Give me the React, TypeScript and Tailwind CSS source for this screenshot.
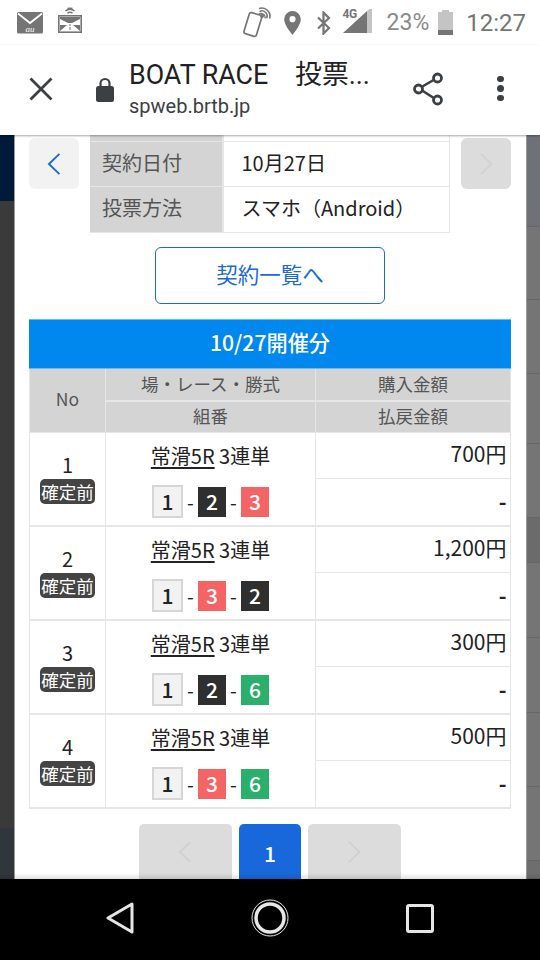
import React from "react";

const jp = "[font-family:'Noto_Sans_CJK_JP','Noto_Sans',sans-serif]";

const GREY = "#757575";

function StatusBar() {
  return (
    <div className="h-[45px] bg-white flex items-center shrink-0 pl-[17px] pr-[14px]">
      <svg width="26" height="22" viewBox="0 0 26 22" className="mr-[15px]">
        <path d="M1.5 0h23A1.5 1.5 0 0 1 26 1.5V20a1.5 1.5 0 0 1-1.5 1.5h-23A1.5 1.5 0 0 1 0 20V1.5A1.5 1.5 0 0 1 1.5 0z" fill={GREY} />
        <path d="M1 1.5l12 9.5 12-9.5" stroke="#fff" strokeWidth="1.8" fill="none" />
        <text x="13" y="19.500" textAnchor="middle" fontSize="9" fontStyle="italic" fontFamily="Liberation Serif, serif" fill="#fff">au</text>
      </svg>
      <svg width="24" height="27" viewBox="0 0 24 27" className="mt-[-6px]">
        <path d="M7.5 5a6.5 6.5 0 0 1 9 0M9.5 2.6a10 10 0 0 1 5 0" stroke={GREY} strokeWidth="1.5" fill="none" />
        <path d="M9.5 7.2a3.5 3.5 0 0 1 5 0" stroke={GREY} strokeWidth="1.5" fill="none" />
        <rect x="0.8" y="9.8" width="22.4" height="16.4" fill="#fff" stroke={GREY} strokeWidth="1.6" />
        <path d="M2 11h20v2L14 17h-4L2 13zM2 25l7-6H2zM22 25l-7-6h7z" fill={GREY} />
        <path d="M11 19h2M12 21v3" stroke={GREY} strokeWidth="1" />
      </svg>
      <div className="flex-1" />
      <svg width="29" height="31" viewBox="0 0 29 31" className="mr-[13px] mt-[-1px]">
        <rect x="4.5" y="6.5" width="13" height="22" rx="2" transform="rotate(17 11 17)" fill="#fff" stroke={GREY} strokeWidth="1.7" />
        <circle cx="20" cy="9" r="2" fill={GREY} />
        <path d="M17.5 4.6a5 5 0 0 1 7 6.6M17 1.6a8 8 0 0 1 10.5 10" stroke={GREY} strokeWidth="1.6" fill="none" />
        <path d="M16.5 7.5a4 4 0 0 1 6.5 4" stroke={GREY} strokeWidth="1.2" fill="none" />
      </svg>
      <svg width="17" height="24" viewBox="0 0 17 24" className="mr-[15px]">
        <path fillRule="evenodd" d="M8.5 0A8.3 8.3 0 0 0 .2 8.3C.2 14.5 8.5 24 8.5 24s8.3-9.5 8.3-15.700A8.300 8.300 0 0 0 8.500 0zm0 11.300a3.100 3.100 0 1 1 0-6.200 3.100 3.100 0 0 1 0 6.200z" fill={GREY} />
      </svg>
      <svg width="16" height="24" viewBox="0 0 16 24" className="mr-[11px]">
        <path d="M2 6.500L13 17l-5.500 5.500V1.500L13 7 2 17.500" stroke={GREY} strokeWidth="2.200" fill="none" />
      </svg>
      <div className="relative w-[30px] h-[27px] mr-[14px]">
        <span className="absolute left-0 top-[-3px] text-[12px] leading-[16px] font-bold text-[#757575] [font-family:Roboto,sans-serif] tracking-[-0.5px]">4G</span>
        <svg width="30" height="27" viewBox="0 0 30 27">
          <path d="M0 24L24 2v22z" fill={GREY} />
          <path d="M24 2l5-4v26h-5z" fill="#c4c4c4" />
        </svg>
      </div>
      <span className="text-[23px] leading-none text-[#8a8a8a] [font-family:Roboto,sans-serif] mr-[9px]">23%</span>
      <div className="w-[15px] h-[25px] mr-[13px] flex flex-col items-center">
        <div className="w-[7px] h-[2px] bg-[#c4c4c4]" />
        <div className="w-[15px] h-[18px] bg-[#c4c4c4]" />
        <div className="w-[15px] h-[5px] bg-[#757575]" />
      </div>
      <span className="text-[24px] leading-none text-[#757575] [font-family:Roboto,sans-serif]">12:27</span>
    </div>
  );
}

function Toolbar() {
  return (
    <div className="h-[90px] bg-white flex items-center shrink-0 relative z-10 pb-[3px] shadow-[0_1px_2px_rgba(0,0,0,0.35)]">
      <svg width="24" height="24" viewBox="0 0 24 24" className="ml-[29px] shrink-0">
        <path d="M1.500 1.500l21 21M22.500 1.500l-21 21" stroke="#3c4043" strokeWidth="2.800" fill="none" />
      </svg>
      <svg width="18" height="25" viewBox="0 0 18 25" className="ml-[43px] shrink-0 mt-[1px]">
        <path d="M4.500 11V6.500a4.500 4.500 0 0 1 9 0V11" stroke="#3c4043" strokeWidth="2.200" fill="none" />
        <rect x="0" y="9" width="18" height="16" rx="2.500" fill="#3c4043" />
      </svg>
      <div className="ml-[15px] w-[250px] flex flex-col text-[#212121] [font-family:Roboto,'Noto_Sans_CJK_JP',sans-serif]">
        <span className="text-[26.800px] leading-[32px] whitespace-pre">BOAT RACE　投票...</span>
        <span className="text-[20px] leading-[24px] mt-[3px] text-[#3c4043]">spweb.brtb.jp</span>
      </div>
      <svg width="32" height="34" viewBox="0 0 32 34" className="ml-[33px] shrink-0">
        <path d="M25 6L7 16.500 25 28" stroke="#3c4043" strokeWidth="2.600" fill="none" />
        <circle cx="25.500" cy="6" r="4" fill="#fff" stroke="#3c4043" strokeWidth="2.800" />
        <circle cx="6.500" cy="17" r="4" fill="#fff" stroke="#3c4043" strokeWidth="2.800" />
        <circle cx="25.500" cy="28" r="4" fill="#fff" stroke="#3c4043" strokeWidth="2.800" />
      </svg>
      <div className="ml-[53px] flex flex-col gap-[3px] shrink-0">
        <div className="w-[6.500px] h-[6.500px] rounded-full bg-[#3c4043]" />
        <div className="w-[6.500px] h-[6.500px] rounded-full bg-[#3c4043]" />
        <div className="w-[6.500px] h-[6.500px] rounded-full bg-[#3c4043]" />
      </div>
    </div>
  );
}

function Chevron({ dir, color, size = 24 }: { dir: "l" | "r"; color: string; size?: number }) {
  return (
    <svg width={size * 0.6} height={size} viewBox="0 0 15 24">
      <path d={dir === "l" ? "M13 1.500L2 12l11 10.500" : "M2 1.500L13 12 2 22.500"} stroke={color} strokeWidth="2" fill="none" />
    </svg>
  );
}

function InfoRow({ label, value, h }: { label: string; value: string; h: string }) {
  return (
    <div className={`flex gap-[1.500px] ${h}`}>
      <div className="w-[132px] bg-[#d4d4d4] flex items-center pl-[12px] pb-[2px] text-[#555] text-[20px]">{label}</div>
      <div className="flex-1 bg-white flex items-center pl-[18px] pb-[2px] text-[#222] text-[20px]">{value}</div>
    </div>
  );
}

type Boat = { n: string; cls: string };
const W: Boat = { n: "1", cls: "" };
const K: Boat = { n: "2", cls: "bg-[#2f2f2f]" };
const R: Boat = { n: "3", cls: "bg-[#f56464]" };
const G: Boat = { n: "6", cls: "bg-[#2bb06c]" };

function Pick({ b }: { b: Boat }) {
  if (!b.cls) {
    return (
      <span className="w-[31px] h-[33px] bg-[#f2f2f2] border-2 border-[#d6d6d6] flex items-center justify-center text-[#222] text-[21px] font-medium leading-none">
        {b.n}
      </span>
    );
  }
  return (
    <span className={`w-[28px] h-[30px] ${b.cls} flex items-center justify-center text-white text-[21px] font-medium leading-none`}>
      {b.n}
    </span>
  );
}

const rows: { no: string; amount: string; picks: [Boat, Boat, Boat] }[] = [
  { no: "1", amount: "700円", picks: [W, K, R] },
  { no: "2", amount: "1,200円", picks: [W, R, K] },
  { no: "3", amount: "300円", picks: [W, K, G] },
  { no: "4", amount: "500円", picks: [W, R, G] },
];

function BetTable() {
  return (
    <div className="bg-[#e6e6e6] px-[1px] pb-[1.500px] grid grid-cols-[75px_209px_194px] gap-x-[1px]">
      <div className="row-span-2 bg-[#d4d4d4] flex items-center justify-center text-[#555] text-[17.500px] mb-[1px] pb-[2px]">No</div>
      <div className="h-[31px] bg-[#d4d4d4] flex items-center justify-center text-[#555] text-[17.500px]">場・レース・勝式</div>
      <div className="h-[31px] bg-[#d4d4d4] flex items-center justify-center text-[#555] text-[17.500px]">購入金額</div>
      <div className="h-[30.500px] mt-[1.500px] mb-[1px] pb-[2px] bg-[#d4d4d4] flex items-center justify-center text-[#555] text-[17.500px]">組番</div>
      <div className="h-[30.500px] mt-[1.500px] mb-[1px] pb-[2px] bg-[#d4d4d4] flex items-center justify-center text-[#555] text-[17.500px]">払戻金額</div>
      {rows.map((r, i) => (
        <React.Fragment key={r.no}>
          <div className={`h-[92px] bg-white flex flex-col items-center justify-center pb-[3px] ${i < 3 ? "mb-[2px]" : ""}`}>
            <span className="text-[#222] text-[20px] leading-[28px]">{r.no}</span>
            <span className="w-[55px] h-[25px] rounded-[5px] bg-[#444] text-white text-[17.500px] leading-[25px] text-center">確定前</span>
          </div>
          <div className={`h-[92px] bg-white flex flex-col items-center pt-[8px] ${i < 3 ? "mb-[2px]" : ""}`}>
            <span className="text-[#222] text-[20px] leading-[30px]">
              <span className="underline underline-offset-[3px]">常滑5R</span> 3連単
            </span>
            <div className="flex items-center mt-[14px] text-[#222] text-[19.500px] leading-none">
              <Pick b={r.picks[0]} />
              <span className="w-[15px] text-center">-</span>
              <Pick b={r.picks[1]} />
              <span className="w-[15px] text-center">-</span>
              <Pick b={r.picks[2]} />
            </div>
          </div>
          <div className={`h-[92px] flex flex-col gap-[1.500px] ${i < 3 ? "mb-[2px]" : ""}`}>
            <div className="h-[44.500px] bg-white flex items-center justify-end pr-[3.500px] pb-[4px] text-[#222] text-[21px]">{r.amount}</div>
            <div className="flex-1 bg-white flex items-center justify-end pr-[3.500px] text-[#222] text-[21px] font-bold">-</div>
          </div>
        </React.Fragment>
      ))}
    </div>
  );
}

function LeftStrip() {
  return (
    <div className="w-[15px] shrink-0 flex flex-col border-r border-[#9a9a9a]">
      <div className="h-[66px] bg-[#001a3a]" />
      <div className="flex-1 bg-[#3a3a3a]" />
      <div className="h-[51px] bg-[#31363c]" />
    </div>
  );
}

function RightStrip() {
  const bands = [
    { h: "h-[92px]", c: "bg-[#6e7278]" },
    { h: "h-[73px]", c: "bg-[#757575]" },
    { h: "h-[74px]", c: "bg-[#757575]" },
    { h: "h-[70px]", c: "bg-[#757575]" },
    { h: "h-[74px]", c: "bg-[#757575]" },
    { h: "h-[45px]", c: "bg-[#6b6b6b]" },
    { h: "h-[75px]", c: "bg-[#757575]" },
    { h: "h-[75px]", c: "bg-[#757575]" },
    { h: "h-[74px]", c: "bg-[#757575]" },
    { h: "h-[74px]", c: "bg-[#757575]" },
    { h: "h-[18px]", c: "bg-[#6e6e6e]" },
  ];
  return (
    <div className="w-[14px] shrink-0 flex flex-col border-l border-[#9a9a9a] overflow-hidden">
      {bands.map((b, i) => (
        <div key={i} className={`${b.h} ${b.c} border-b border-[#666] shrink-0`} />
      ))}
    </div>
  );
}

function Pager() {
  return (
    <div className="flex justify-center gap-[7px] mt-[15px]">
      <div className="w-[93px] h-[70px] shrink-0 rounded-[5px] bg-[#dcdcdc] flex items-center justify-center pb-[13px]">
        <Chevron dir="l" color="#d0d0d0" />
      </div>
      <div className="w-[62px] h-[70px] shrink-0 rounded-[5px] bg-[#1868dc] flex items-start justify-center pt-[14px] text-white text-[21px] font-medium leading-[30px]">1</div>
      <div className="w-[93px] h-[70px] shrink-0 rounded-[5px] bg-[#dcdcdc] flex items-center justify-center pb-[13px]">
        <Chevron dir="r" color="#d0d0d0" />
      </div>
    </div>
  );
}

function Content() {
  return (
    <div className="relative flex-1 flex min-h-0 overflow-hidden">
      <LeftStrip />
      <div className={`flex-1 bg-white pl-[14px] pr-[15px] overflow-hidden ${jp}`}>
        <div className="flex justify-between items-start">
          <button className="w-[50px] h-[51px] mt-[3px] rounded-[6px] bg-[#f2f2f2] flex items-center justify-center">
            <Chevron dir="l" color="#1a6bd8" />
          </button>
          <div className="w-[360px] bg-[#e6e6e6] flex flex-col gap-[1.500px] pb-[1.500px] pr-[1px]">
            <InfoRow label="" value="" h="h-[5.500px]" />
            <InfoRow label="契約日付" value="10月27日" h="h-[43.500px]" />
            <InfoRow label="投票方法" value="スマホ（Android）" h="h-[44.500px]" />
          </div>
          <button className="w-[50px] h-[51px] mt-[3px] rounded-[6px] bg-[#dcdcdc] flex items-center justify-center">
            <Chevron dir="r" color="#d2d2d2" />
          </button>
        </div>
        <button className="block mx-auto mt-[14px] w-[230px] h-[57px] rounded-[6px] border-[1.500px] border-[#1a6bd8] text-[#1a6bd8] text-[21.500px] bg-white pb-[3px]">
          契約一覧へ
        </button>
        <div className="mt-[15px] h-[50px] bg-[#0088ee] border-y border-[#66bbf5] flex items-center justify-center text-white text-[21.200px] font-medium pb-[4px]">
          10/27開催分
        </div>
        <BetTable />
        <Pager />
      </div>
      <RightStrip />
      <div className="absolute left-0 right-0 bottom-0 h-[6px] bg-gradient-to-b from-transparent to-[rgba(0,0,0,0.12)]" />
    </div>
  );
}

function NavBar() {
  return (
    <div className="h-[81px] bg-black shrink-0 flex items-center pb-[3px]">
      <svg width="28" height="32" viewBox="0 0 28 32" className="ml-[106px]">
        <path d="M26 2v28L2 16z" stroke="#e6e6e6" strokeWidth="3" strokeLinejoin="round" fill="none" />
      </svg>
      <svg width="38" height="38" viewBox="0 0 38 38" className="ml-[117px]">
        <circle cx="19" cy="19" r="18" stroke="#e6e6e6" strokeWidth="1" fill="none" />
        <circle cx="19" cy="19" r="14" stroke="#e6e6e6" strokeWidth="3.500" fill="none" />
      </svg>
      <svg width="28" height="29" viewBox="0 0 28 29" className="ml-[117px]">
        <rect x="1.500" y="1.500" width="25" height="26" rx="1.500" stroke="#e6e6e6" strokeWidth="3" fill="none" />
      </svg>
    </div>
  );
}

export default function App() {
  return (
    <div className="w-[540px] h-[960px] flex flex-col overflow-hidden bg-white">
      <StatusBar />
      <Toolbar />
      <Content />
      <NavBar />
    </div>
  );
}
